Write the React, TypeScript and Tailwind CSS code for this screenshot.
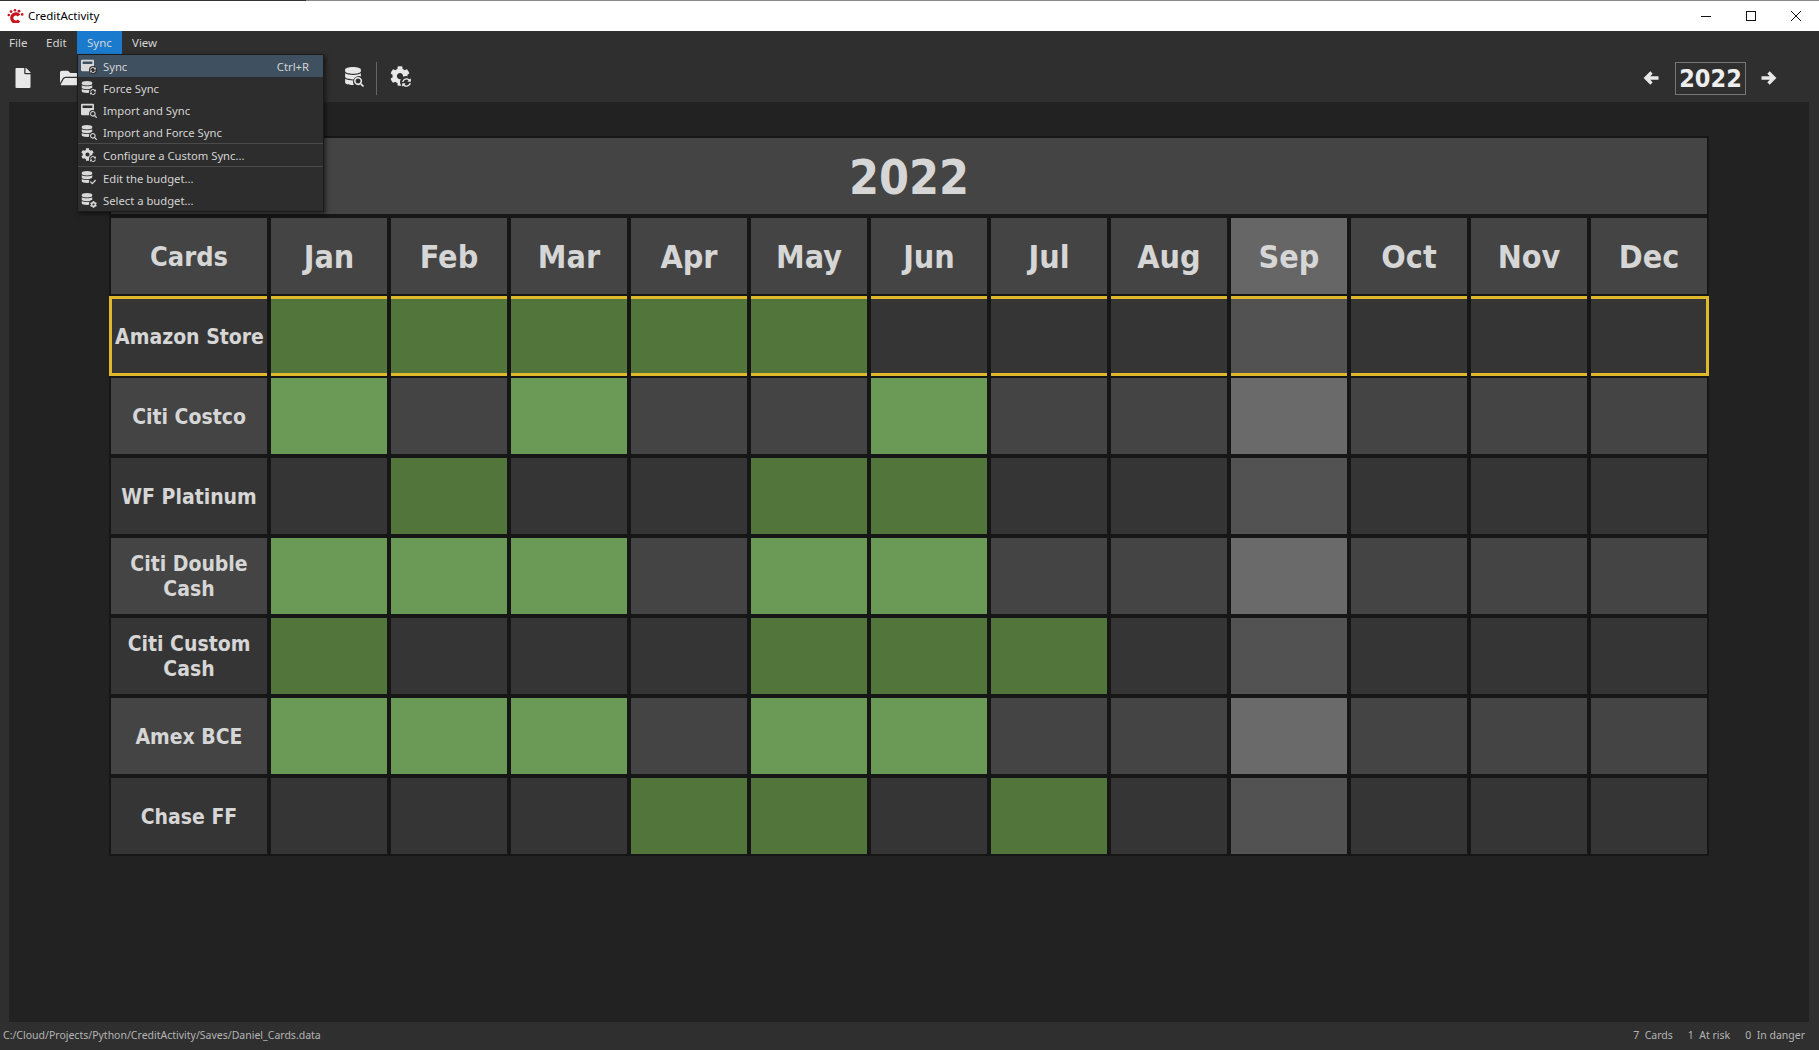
import type { ReactNode } from "react";
import {
  FaCheck,
  FaCog,
  FaDatabase,
  FaFile,
  FaFolderOpen,
  FaSearch,
  FaSyncAlt,
  FaWindowMaximize,
} from "react-icons/fa";

const MONTHS = ["Jan", "Feb", "Mar", "Apr", "May", "Jun", "Jul", "Aug", "Sep", "Oct", "Nov", "Dec"];

// active: month indexes with a green cell
const CARDS = [
  { name: "Amazon Store", active: [0, 1, 2, 3, 4], selected: true },
  { name: "Citi Costco", active: [0, 2, 5] },
  { name: "WF Platinum", active: [1, 4, 5] },
  { name: "Citi Double Cash", active: [0, 1, 2, 4, 5] },
  { name: "Citi Custom Cash", active: [0, 4, 5, 6] },
  { name: "Amex BCE", active: [0, 1, 2, 4, 5] },
  { name: "Chase FF", active: [3, 4, 6] },
];

const CURRENT_MONTH = 8;

function Logo() {
  return (
    <svg width="17" height="14" viewBox="0 0 17 14" className="shrink-0">
      <circle cx="1.8" cy="6" r="1.3" fill="#c8141e" />
      <circle cx="4" cy="2.6" r="1.4" fill="#c8141e" />
      <circle cx="8" cy="1.3" r="1.3" fill="#c8141e" />
      <circle cx="12" cy="2.2" r="1.4" fill="#c8141e" />
      <circle cx="15.2" cy="5.4" r="1.3" fill="#c8141e" />
      <path d="M12 6.4A4.1 4.1 0 1 0 12 11.6" fill="none" stroke="#c8141e" strokeWidth="3.2" />
    </svg>
  );
}

function Arrow({ right }: { right?: boolean }) {
  return (
    <svg width="16" height="16" viewBox="0 0 16 16" className={right ? "rotate-180" : ""}>
      <path d="M15.5 8H3.5M8.5 2.5L3 8L8.5 13.5" fill="none" stroke="#e8e8e8" strokeWidth="3.4" />
    </svg>
  );
}

function Layered({ base, badge, size }: { base: ReactNode; badge: ReactNode; size: string }) {
  return (
    <span className={`relative inline-block shrink-0 ${size}`}>
      {base}
      {badge}
    </span>
  );
}

function SmallIcon({ kind }: { kind: string }) {
  const gray = "#d9d9d9";
  const window = <FaWindowMaximize size={13} color={gray} className="absolute left-0 top-0" />;
  const db = <FaDatabase size={12} color={gray} className="absolute left-0 top-0" />;
  const gear = <FaCog size={13} color={gray} className="absolute left-0 top-0" />;
  const mark = (node: ReactNode) => (
    <span className="absolute -right-px -bottom-px flex h-[8px] w-[8px] items-center justify-center rounded-full bg-[#2d2d2d]">
      {node}
    </span>
  );
  const sync = <FaSyncAlt size={6} color={gray} />;
  const search = <FaSearch size={7} color={gray} />;
  const check = <FaCheck size={6} color={gray} />;
  const cog = <FaCog size={7} color={gray} />;

  const map: Record<string, [ReactNode, ReactNode]> = {
    windowSync: [window, sync],
    dbSync: [db, sync],
    windowSearch: [window, search],
    dbSearch: [db, search],
    gearSync: [gear, sync],
    dbCheck: [db, check],
    dbGear: [db, cog],
  };
  const [base, badge] = map[kind];
  return <Layered size="h-[14px] w-[15px]" base={base} badge={mark(badge)} />;
}

const MENU = [
  { label: "Sync", icon: "windowSync", shortcut: "Ctrl+R", active: true },
  { label: "Force Sync", icon: "dbSync" },
  { label: "Import and Sync", icon: "windowSearch" },
  { label: "Import and Force Sync", icon: "dbSearch", sep: true },
  { label: "Configure a Custom Sync...", icon: "gearSync", sep: true },
  { label: "Edit the budget...", icon: "dbCheck" },
  { label: "Select a budget...", icon: "dbGear" },
];

function SyncMenu() {
  return (
    <div className="absolute left-0 top-[23px] z-20 w-[247px] border border-[#1b1b1b] bg-[#2d2d2d] text-[11.25px] shadow-[2px_2px_4px_rgba(0,0,0,0.5)]">
      {MENU.map((item) => (
        <div key={item.label}>
          <div
            className={`flex h-[22px] items-center pl-[3px] pr-[14px] text-[#d4d4d4] ${item.active ? "bg-[#3f5060]" : ""}`}
          >
            <span className="flex w-[22px] shrink-0 items-center">
              <SmallIcon kind={item.icon} />
            </span>
            <span className="flex-1 pt-[2px]">{item.label}</span>
            {item.shortcut && <span className="pt-[2px]">{item.shortcut}</span>}
          </div>
          {item.sep && <div className="h-px bg-[#4a4a4a]" />}
        </div>
      ))}
    </div>
  );
}

function TitleBar() {
  return (
    <div className="flex h-[31px] shrink-0 flex-col bg-white">
      <div className="flex h-px">
        <div className="w-[306px] bg-[#333]" />
        <div className="flex-1 bg-[#8a8a8a]" />
      </div>
      <div className="flex flex-1 items-center pl-[7px] text-[11.5px] text-black">
        <Logo />
        <span className="ml-[4px]">CreditActivity</span>
        <div className="ml-auto flex items-center gap-[35px] pr-[18px]">
          <svg width="10" height="10" viewBox="0 0 10 10">
            <path d="M0 5.5H10" stroke="#111" />
          </svg>
          <svg width="10" height="10" viewBox="0 0 10 10">
            <rect x="0.5" y="0.5" width="9" height="9" fill="none" stroke="#111" />
          </svg>
          <svg width="10" height="10" viewBox="0 0 10 10">
            <path d="M0 0L10 10M10 0L0 10" stroke="#111" />
          </svg>
        </div>
      </div>
    </div>
  );
}

function MenuBar() {
  return (
    <div className="flex h-[23px] shrink-0 text-[11.5px] text-[#d4d4d4]">
      <div className="flex w-[38px] items-center pl-[9px]">File</div>
      <div className="flex w-[39px] items-center pl-[8px]">Edit</div>
      <div className="relative flex w-[45px] items-center bg-[#1a7bce] pl-[10px]">
        Sync
        <SyncMenu />
      </div>
      <div className="flex items-center pl-[10px]">View</div>
    </div>
  );
}

function Toolbar() {
  return (
    <div className="flex h-[48px] shrink-0 items-center pl-[13px] pr-[42px]">
      <FaFile size={20} color="#e8e8e8" />
      <FaFolderOpen size={22} color="#e8e8e8" className="ml-[27px]" />
      <span className="ml-[262px] pt-[4px]">
        <Layered
          size="h-[20px] w-[20px] block"
          base={<FaDatabase size={18} color="#e8e8e8" className="absolute left-0 top-0" />}
          badge={
            <span className="absolute -right-px -bottom-px flex h-[12px] w-[12px] items-center justify-center rounded-full bg-[#2f2f2f]">
              <FaSearch size={10} color="#e8e8e8" />
            </span>
          }
        />
      </span>
      <div className="ml-[12px] h-[33px] w-px bg-[#666]" />
      <span className="ml-[13px] pt-[4px]">
        <Layered
          size="h-[22px] w-[21px] block"
          base={<FaCog size={20} color="#e8e8e8" className="absolute left-0 top-0" />}
          badge={
            <span className="absolute -right-px bottom-0 flex h-[12px] w-[12px] items-center justify-center rounded-full bg-[#2f2f2f]">
              <FaSyncAlt size={9} color="#e8e8e8" />
            </span>
          }
        />
      </span>
      <div className="ml-auto flex items-center">
        <Arrow />
        <div className="ml-[16px] flex h-[33px] w-[71px] items-center justify-center border border-[#777] pt-px font-['DejaVu_Sans_Condensed','DejaVu_Sans',sans-serif] text-[25px] font-bold text-[#eee]">
          2022
        </div>
        <span className="ml-[15px] flex">
          <Arrow right />
        </span>
      </div>
    </div>
  );
}

function monthCellColor(month: number, card: { active: number[] }, light: boolean) {
  if (card.active.includes(month)) return light ? "bg-[#6a9a56]" : "bg-[#52753b]";
  if (month === CURRENT_MONTH) return light ? "bg-[#6a6a6a]" : "bg-[#525252]";
  return light ? "bg-[#444444]" : "bg-[#353535]";
}

function ActivityGrid() {
  return (
    <div className="grid w-[1600px] grid-cols-[156px_repeat(12,116px)] auto-rows-[76px] gap-[4px] bg-[#161616] p-[2px] font-['DejaVu_Sans_Condensed','DejaVu_Sans',sans-serif] font-bold text-[#d6d6d6]">
      <div className="col-span-13 flex items-center justify-center bg-[#444444] pt-[2px] text-[48px]">2022</div>
      <div className="flex items-center justify-center bg-[#444444] pt-[2px] text-[27px]">Cards</div>
      {MONTHS.map((m, i) => (
        <div
          key={m}
          className={`flex items-center justify-center pt-[2px] text-[32px] ${i === CURRENT_MONTH ? "bg-[#666666]" : "bg-[#444444]"}`}
        >
          {m}
        </div>
      ))}
      {CARDS.map((card, row) => {
        const light = row % 2 === 1;
        const sel = card.selected
          ? "-my-[2px] border-y-[3px] border-[#e0b92a]"
          : "";
        return (
          <div key={card.name} className="contents">
            <div
              className={`flex items-center justify-center pt-[2px] text-center text-[21px] leading-[25px] ${light ? "bg-[#444444]" : "bg-[#353535]"} ${sel} ${card.selected ? "-ml-[2px] border-l-[3px] whitespace-nowrap" : "px-[3px]"}`}
            >
              {card.name}
            </div>
            {MONTHS.map((m, i) => (
              <div
                key={m}
                className={`${monthCellColor(i, card, light)} ${sel} ${card.selected && i === 11 ? "-mr-[2px] border-r-[3px]" : ""}`}
              />
            ))}
          </div>
        );
      })}
    </div>
  );
}

function StatusBar() {
  return (
    <div className="flex h-[28px] shrink-0 items-center justify-between pb-[1px] pl-[3px] pr-[14px] text-[10.5px] text-[#b4b4b4]">
      <span>C:/Cloud/Projects/Python/CreditActivity/Saves/Daniel_Cards.data</span>
      <div className="flex gap-[15px]">
        <span>7&nbsp;&nbsp;Cards</span>
        <span>1&nbsp;&nbsp;At risk</span>
        <span>0&nbsp;&nbsp;In danger</span>
      </div>
    </div>
  );
}

export default function App() {
  return (
    <div className="flex h-[1050px] w-[1819px] flex-col overflow-hidden bg-[#2f2f2f] font-['Noto_Sans',sans-serif]">
      <TitleBar />
      <MenuBar />
      <Toolbar />
      <div className="ml-[9px] mr-[10px] min-h-0 flex-1 bg-[#222222] pt-[34px]">
        <div className="flex justify-center">
          <ActivityGrid />
        </div>
      </div>
      <StatusBar />
    </div>
  );
}
